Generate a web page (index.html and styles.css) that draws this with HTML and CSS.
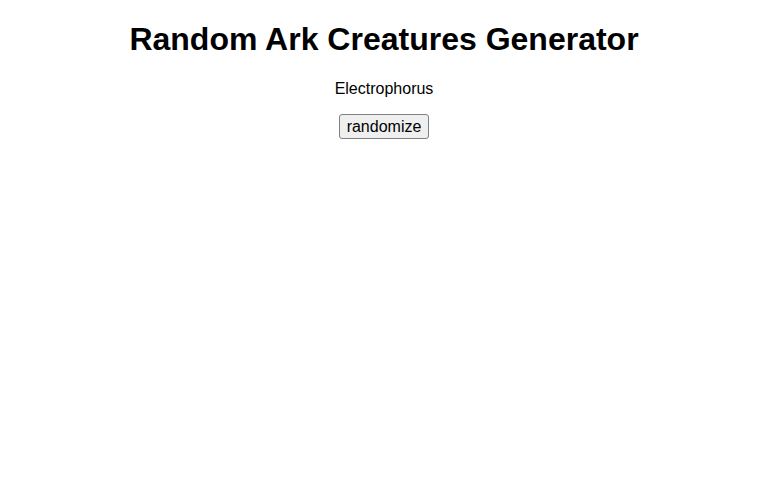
FILE: index.html
```html
<!DOCTYPE html>
<html>
<head>
<meta charset="utf-8">
<link rel="stylesheet" href="styles.css">
</head>
<body>
<div class="app">
  <h1 class="title">Random Ark Creatures Generator</h1>
  <p class="creature">Electrophorus</p>
  <button class="btn">randomize</button>
</div>
</body>
</html>
```
FILE: styles.css
```css
body {
  margin: 0;
  font-family: "Liberation Sans", Arial, sans-serif;
  color: #000;
  background: #fff;
}
.app {
  text-align: center;
}
.title {
  font-size: 32px;
  font-weight: bold;
  margin: 21.44px 0;
}
.creature {
  font-size: 16px;
  margin: 16px 0;
}
.btn {
  font-family: "Liberation Sans", Arial, sans-serif;
  font-size: 16px;
  padding: 3px 7px 2px;
  border: 1px solid #808080;
  border-radius: 3px;
  background: #efefef;
  color: #000;
}
```
